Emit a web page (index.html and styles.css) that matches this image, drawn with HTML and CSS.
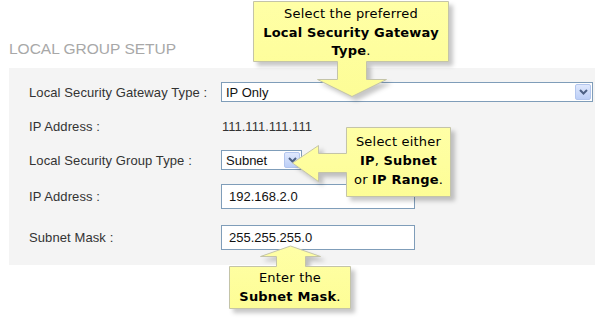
FILE: index.html
```html
<!DOCTYPE html>
<html lang="en">
<head>
    <meta charset="utf-8">
    <title>Local Group Setup</title>
    <link rel="stylesheet" href="styles.css">
</head>
<body>

<h2 class="title">LOCAL GROUP SETUP</h2>

<div class="panel">
    <div class="row r1">
        <label>Local Security Gateway Type :</label>
        <div class="select wide">
            <span class="val">IP Only</span>
            <span class="btn"><svg width="9" height="6" viewBox="0 0 9 6"><path d="M1 1 L4.5 4.5 L8 1" fill="none" stroke="#4d6185" stroke-width="2"/></svg></span>
        </div>
    </div>
    <div class="row r2">
        <label>IP Address :</label>
        <span class="static">111.111.111.111</span>
    </div>
    <div class="row r3">
        <label>Local Security Group Type :</label>
        <div class="select small">
            <span class="val">Subnet</span>
            <span class="btn"><svg width="9" height="6" viewBox="0 0 9 6"><path d="M1 1 L4.5 4.5 L8 1" fill="none" stroke="#4d6185" stroke-width="2"/></svg></span>
        </div>
    </div>
    <div class="row r4">
        <label>IP Address :</label>
        <input class="field" type="text" value="192.168.2.0">
    </div>
    <div class="row r5">
        <label>Subnet Mask :</label>
        <input class="field" type="text" value="255.255.255.0">
    </div>
</div>

<!-- callouts drawn over the form -->
<svg class="overlay" width="595" height="319">
    <defs>
        <linearGradient id="fill" x1="0" y1="0" x2="0" y2="1">
            <stop offset="0" stop-color="#ffffa6"/>
            <stop offset="1" stop-color="#fdfd96"/>
        </linearGradient>
    </defs>
    <path class="shape" d="M253.5 1.5 H448.5 V61.5 H366.5 V79.5 H386.5 L352 96.5 L317.5 79.5 H337.5 V61.5 H253.5 Z"/>
    <path class="shape" d="M346.5 127.5 H450.5 V196.5 H346.5 V172.5 H318.5 V181.5 L292.5 163 L318.5 145.5 V153.5 H346.5 Z"/>
    <path class="shape" d="M229.5 266.5 H276.5 V256.5 H260.5 L290.5 246 L320.5 256.5 H305.5 V266.5 H350.5 V308.5 H229.5 Z"/>
</svg>

<div class="tip tip1">Select the preferred<br><b>Local Security Gateway<br>Type</b>.</div>
<div class="tip tip2">Select either<br><b>IP</b>, <b>Subnet</b><br>or <b>IP Range</b>.</div>
<div class="tip tip3">Enter the<br><b>Subnet Mask</b>.</div>

</body>
</html>
```

FILE: styles.css
```css
body {
    margin: 0;
    width: 595px;
    height: 319px;
    position: relative;
    overflow: hidden;
    background-color: #ffffff;
    font-family: 'Liberation Sans', Arial, sans-serif;
}
.title {
    margin: 0;
    padding: 40px 0 0 9px;
    height: 28px;
    font-size: 15.5px;
    font-weight: normal;
    color: #a8a8a8;
}
.panel {
    margin-left: 9px;
    padding: 14px 0 15px 20px;
    background-color: #f4f4f4;
    display: flex;
    flex-direction: column;
    gap: 14px;
}
.row {
    display: flex;
    align-items: center;
    height: 20px;
}
.r4, .r5 {
    height: 25px;
}
.r5 {
    margin-top: 2px;
}
label {
    width: 192px;
    font-size: 13px;
    color: #333;
    letter-spacing: 0.1px;
}
.static {
    font-size: 13px;
    color: #333;
    padding-left: 1px;
}
.select {
    box-sizing: border-box;
    height: 20px;
    border: 1px solid #7f9db9;
    background-color: #fff;
    display: flex;
    align-items: center;
    justify-content: space-between;
    padding: 0 1px 0 4px;
    font-size: 13px;
    color: #111;
}
.wide {
    width: 372px;
}
.small {
    width: 81px;
    height: 20px;
}
.btn {
    box-sizing: border-box;
    width: 16px;
    height: 16px;
    border: 1px solid #b3c6ee;
    border-radius: 2px;
    background: linear-gradient(#dfe8fd, #bccff7);
    display: flex;
    align-items: center;
    justify-content: center;
}
.field {
    box-sizing: border-box;
    width: 194px;
    height: 25px;
    border: 1px solid #7f9db9;
    padding: 0 0 0 7px;
    margin: 0;
    font-family: 'Liberation Sans', Arial, sans-serif;
    font-size: 13px;
    color: #111;
    background-color: #fff;
}
.overlay {
    position: absolute;
    left: 0;
    top: 0;
    pointer-events: none;
    filter: drop-shadow(4px 4px 2px rgba(0, 0, 0, 0.22));
}
.shape {
    fill: url(#fill);
    stroke: #c4c4a8;
    stroke-width: 1;
}
.tip {
    position: absolute;
    text-align: center;
    font-family: 'DejaVu Sans', Verdana, sans-serif;
    font-size: 13px;
    letter-spacing: 0.2px;
    color: #000;
    line-height: 19px;
}
.tip b {
    font-weight: bold;
}
.tip1 {
    left: 253px;
    top: 5px;
    width: 196px;
    line-height: 18.5px;
}
.tip2 {
    left: 346px;
    top: 132px;
    width: 105px;
}
.tip3 {
    left: 229px;
    top: 268px;
    width: 122px;
}
```
